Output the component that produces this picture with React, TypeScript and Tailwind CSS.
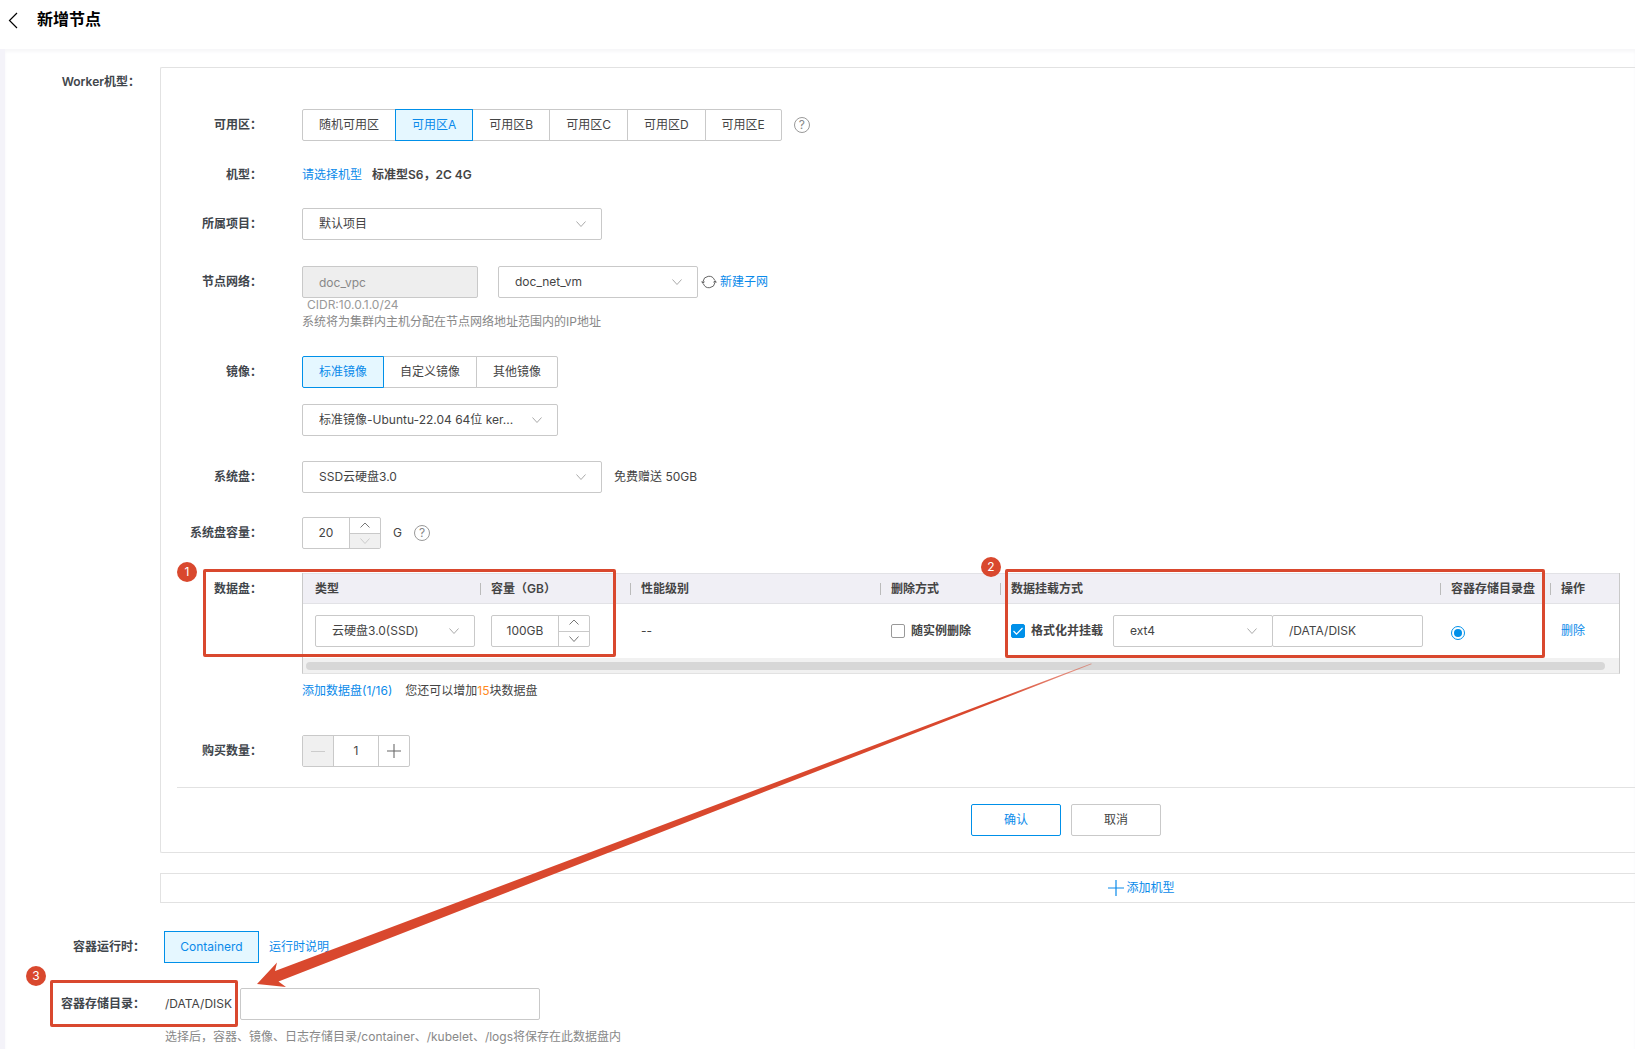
import { ReactNode, useState } from "react"

const BORDER = "border border-[#c9c9c9]"

const Arrow = ({ up = false, className = "" }: { up?: boolean; className?: string }) => (
    <svg width="12" height="8" viewBox="0 0 12 8" fill="none" stroke="currentColor" className={className} aria-hidden="true">
        <path d={up ? "M1.5 5.5 6 1l4.5 4.5" : "M1.5 1.5 6 6.5l4.5-5"} />
    </svg>
)

const Plus = ({ size }: { size: number }) => (
    <svg width={size} height={size} viewBox="0 0 16 16" fill="none" stroke="currentColor" aria-hidden="true">
        <path d="M0 8h16M8 0v16" strokeWidth="1.2" />
    </svg>
)

const Help = () => (
    <button type="button" aria-label="帮助" className="flex h-4 w-4 items-center justify-center rounded-full border border-[#999] text-xs leading-none text-[#888]">
        ?
    </button>
)

const Select = ({ id, label, value, className }: { id: string; label: string; value: string; className: string }) => (
    <div className={`relative ${className}`}>
        <select id={id} aria-label={label} className={`h-8 w-full appearance-none rounded-xs bg-white pr-10 pl-4 text-[#444] ${BORDER}`}>
            <option>{value}</option>
        </select>
        <Arrow className="pointer-events-none absolute top-3 right-[15px] text-[#aaa]" />
    </div>
)

const Tabs = ({ items, start }: { items: string[]; start: string }) => {
    const [active, setActive] = useState<string>(start)
    return (
        <div className="flex">
            {items.map((item) => (
                <button
                    key={item}
                    type="button"
                    onClick={() => setActive(item)}
                    className={`-mr-px h-8 border px-4 first:rounded-l-xs last:mr-0 last:rounded-r-xs ${
                        active === item ? "relative border-[#0090e9] bg-[#e5f7ff] text-[#0a8aea]" : "border-[#c9c9c9] bg-white"
                    }`}
                >
                    {item}
                </button>
            ))}
        </div>
    )
}

const Stepper = ({ label, value, inputClass, minReached = false }: { label: string; value: string; inputClass: string; minReached?: boolean }) => (
    <div className={`flex h-8 w-fit rounded-xs ${BORDER}`}>
        <input aria-label={label} defaultValue={value} className={`text-center ${inputClass}`} />
        <div className="flex w-[31px] flex-col border-l border-[#c9c9c9] text-[#777]">
            <button type="button" aria-label="增加" className="flex h-[15px] items-center justify-center">
                <Arrow up />
            </button>
            <button
                type="button"
                aria-label="减少"
                disabled={minReached}
                className="flex h-[15px] items-center justify-center border-t border-[#c9c9c9] disabled:bg-[#f0f0f0] disabled:text-[#ccc]"
            >
                <Arrow />
            </button>
        </div>
    </div>
)

const Row = ({ label, className = "", children }: { label: string; className?: string; children: ReactNode }) => (
    <div className={`flex ${className}`}>
        <div className="w-[101px] shrink-0 text-right leading-8 font-semibold text-[#41464c]">{label}</div>
        <div className="ml-10 min-w-0 flex-1">{children}</div>
    </div>
)

const Th = ({ width, children }: { width: string; children: ReactNode }) => (
    <th className={`p-0 text-left font-semibold ${width}`}>
        <div className="border-l border-[#bbb] pl-[10px] leading-3">{children}</div>
    </th>
)

const Check = ({ label, checked }: { label: string; checked: boolean }) => (
    <label className="flex shrink-0 items-center gap-1.5 font-semibold">
        <span className="relative flex h-3.5 w-3.5">
            <input
                type="checkbox"
                defaultChecked={checked}
                className="peer h-3.5 w-3.5 appearance-none rounded-xs border border-[#999] bg-white checked:border-[#0090e9] checked:bg-[#0090e9]"
            />
            <svg viewBox="0 0 14 14" fill="none" stroke="#fff" className="pointer-events-none absolute inset-0 hidden peer-checked:block" aria-hidden="true">
                <path d="m2.5 7 3 3.2 6-6.2" strokeWidth="1.2" />
            </svg>
        </span>
        {label}
    </label>
)

const DiskTable = () => (
    <div className="mr-[15px] border-x border-b border-x-[#c9c9c9] border-b-[#e2e2e2]">
        <table className="w-full table-fixed border-collapse">
            <thead>
                <tr className="h-[30px] border-y border-[#e2e2e6] bg-[#f0eff5]">
                    <th className="w-[177px] p-0 pl-3 text-left font-semibold">类型</th>
                    <Th width="w-[150px]">容量（GB）</Th>
                    <Th width="w-[250px]">性能级别</Th>
                    <Th width="w-[120px]">删除方式</Th>
                    <Th width="w-[440px]">数据挂载方式</Th>
                    <Th width="w-[110px]">容器存储目录盘</Th>
                    <Th width="">操作</Th>
                </tr>
            </thead>
            <tbody>
                <tr className="h-[54px]">
                    <td className="pl-3">
                        <Select id="disk-type" label="类型" value="云硬盘3.0(SSD)" className="w-40" />
                    </td>
                    <td className="pl-[11px]">
                        <Stepper label="容量" value="100GB" inputClass="w-[66px]" />
                    </td>
                    <td className="pl-[11px]">--</td>
                    <td className="pl-[11px]">
                        <Check label="随实例删除" checked={false} />
                    </td>
                    <td className="pl-[11px]">
                        <div className="flex items-center">
                            <Check label="格式化并挂载" checked />
                            <Select id="fs" label="文件系统" value="ext4" className="ml-[10px] w-40" />
                            <input aria-label="挂载目录" defaultValue="/DATA/DISK" className={`-ml-px h-8 w-[151px] rounded-xs px-4 ${BORDER}`} />
                        </div>
                    </td>
                    <td className="pl-[11px]">
                        <input
                            type="radio"
                            aria-label="容器存储目录盘"
                            defaultChecked
                            className="mt-1 block h-3.5 w-3.5 appearance-none rounded-full border border-[#0090e9] bg-[#0090e9] bg-clip-content p-0.5"
                        />
                    </td>
                    <td className="pl-[11px]">
                        <a href="#" className="text-[#0a8aea]">删除</a>
                    </td>
                </tr>
            </tbody>
        </table>
        <div className="h-[15px] bg-[#f1f1f1] py-1 pr-3.5 pl-[3px]">
            <div className="h-2 rounded-full bg-[#d7d7d7]" />
        </div>
    </div>
)

const Callout = ({ n, badge, box }: { n: number; badge: string; box: string }) => (
    <>
        <div className={`absolute rounded-xs border-3 border-[#d9482e] ${box}`} />
        <div className={`absolute flex h-5 w-5 items-center justify-center rounded-full bg-[#d9482e] text-white ${badge}`}>{n}</div>
    </>
)

const Annotations = () => (
    <div className="pointer-events-none absolute inset-0">
        <Callout n={1} box="top-[569px] left-[203px] h-[88px] w-[413px]" badge="top-[562px] left-[177px]" />
        <Callout n={2} box="top-[569px] left-[1005px] h-[89px] w-[540px]" badge="top-[557px] left-[981px]" />
        <Callout n={3} box="top-[980px] left-[50px] h-[47px] w-[188px]" badge="top-[966px] left-[26px]" />
        <svg className="absolute top-[660px] left-[250px]" width="850" height="340" viewBox="250 660 850 340" aria-hidden="true">
            <defs>
                <linearGradient id="fade" gradientUnits="userSpaceOnUse" x1="1000" y1="700" x2="1090" y2="664">
                    <stop offset="0" stopColor="#d9482e" />
                    <stop offset="1" stopColor="#d9482e" stopOpacity="0.5" />
                </linearGradient>
            </defs>
            <path d="M257 984 277 962.500 275 971 1091 663.500 1092 664 278.500 981.500 286 987Z" fill="url(#fade)" />
        </svg>
    </div>
)

export default function App() {
    return (
        <div className="relative overflow-hidden bg-[#f4f3f9] font-['Inter','Noto_Sans_CJK_SC',sans-serif] text-xs text-[#444]">
            <header className="flex h-[49px] items-start bg-white pt-[7px] pl-2">
                <a href="#" aria-label="返回" className="mt-[5px] text-black">
                    <svg width="11" height="17" viewBox="0 0 11 17" fill="none" stroke="currentColor" strokeWidth="1.2" aria-hidden="true">
                        <path d="M9 1 1.500 8.500 9 16" />
                    </svg>
                </a>
                <h1 className="ml-[18px] text-base leading-6 font-semibold text-black">新增节点</h1>
            </header>

            <main className="ml-[5px] bg-white pt-[18px] pb-[3px] shadow-[inset_0_3px_3px_#f7f7f9]">
                <div className="flex">
                    <div className="mr-5 w-[135px] shrink-0 text-right leading-[30px] font-semibold text-[#41464c]">Worker机型：</div>
                    <section className="min-w-0 flex-1 rounded-l-xs border border-r-0 border-[#e2e2e2] pt-[41px] pb-4">
                        <Row label="可用区：">
                            <div className="flex items-center gap-3">
                                <Tabs start="可用区A" items={["随机可用区", "可用区A", "可用区B", "可用区C", "可用区D", "可用区E"]} />
                                <Help />
                            </div>
                        </Row>
                        <Row label="机型：" className="mt-[18px]">
                            <div className="flex gap-2.5 leading-8">
                                <a href="#" className="text-[#0a8aea]">请选择机型</a>
                                <b className="font-semibold">标准型S6，2C 4G</b>
                            </div>
                        </Row>
                        <Row label="所属项目：" className="mt-[17px]">
                            <Select id="project" label="所属项目" value="默认项目" className="w-75" />
                        </Row>
                        <Row label="节点网络：" className="mt-[26px]">
                            <div className="flex items-center">
                                <input aria-label="VPC" disabled value="doc_vpc" className={`h-8 w-44 rounded-xs bg-[#eee] px-4 text-[#888] ${BORDER}`} />
                                <Select id="subnet" label="子网" value="doc_net_vm" className="ml-5 w-50" />
                                <button type="button" aria-label="刷新" className="ml-[3px] text-[#666]">
                                    <svg width="16" height="14" viewBox="0 0 16 14" fill="none" stroke="currentColor" aria-hidden="true">
                                        <path d="M2 6.500A6 6 0 0 1 13.500 5M14 7.500A6 6 0 0 1 2.500 9" />
                                        <path d="M0 6.500h4L2 9ZM12 7.500h4L14 5Z" fill="currentColor" stroke="none" />
                                    </svg>
                                </button>
                                <a href="#" className="ml-[3px] text-[#0a8aea]">新建子网</a>
                            </div>
                            <p className="pl-[5px] leading-[14px] text-[#999]">CIDR:10.0.1.0/24</p>
                            <p className="leading-5 text-[#888]">系统将为集群内主机分配在节点网络地址范围内的IP地址</p>
                        </Row>
                        <Row label="镜像：" className="mt-6">
                            <Tabs start="标准镜像" items={["标准镜像", "自定义镜像", "其他镜像"]} />
                            <Select id="image" label="镜像" value="标准镜像-Ubuntu-22.04 64位 ker..." className="mt-4 w-64" />
                        </Row>
                        <Row label="系统盘：" className="mt-[25px]">
                            <div className="flex items-center gap-3">
                                <Select id="sysdisk" label="系统盘" value="SSD云硬盘3.0" className="w-75" />
                                <span>免费赠送 50GB</span>
                            </div>
                        </Row>
                        <Row label="系统盘容量：" className="mt-6">
                            <div className="flex items-center gap-3">
                                <Stepper label="系统盘容量" value="20" inputClass="w-[46px]" minReached />
                                <span>G</span>
                                <Help />
                            </div>
                        </Row>
                        <Row label="数据盘：" className="mt-6">
                            <DiskTable />
                            <div className="mt-[7px] flex gap-[13px] leading-5">
                                <a href="#" className="text-[#0a8aea]">添加数据盘(1/16)</a>
                                <span>您还可以增加<span className="text-[#ff8a1e]">15</span>块数据盘</span>
                            </div>
                        </Row>
                        <Row label="购买数量：" className="mt-[34px]">
                            <div className={`flex h-8 w-[108px] rounded-xs ${BORDER}`}>
                                <button type="button" disabled aria-label="减少" className="flex w-[30px] items-center justify-center bg-[#f0f0f0] text-[#ccc]">
                                    <svg width="14" height="14" viewBox="0 0 14 14" stroke="currentColor" aria-hidden="true">
                                        <path d="M0 7.500h14" />
                                    </svg>
                                </button>
                                <input aria-label="购买数量" defaultValue="1" className="min-w-0 flex-1 border-x border-[#c9c9c9] text-center" />
                                <button type="button" aria-label="增加" className="flex w-[30px] items-center justify-center text-[#666]">
                                    <Plus size={14} />
                                </button>
                            </div>
                        </Row>
                        <div className="mt-5 ml-4 flex justify-center gap-2.5 border-t border-[#e2e2e2] pt-4 pl-80">
                            <button type="button" className="h-8 w-[90px] rounded-xs border border-[#0090e9] text-[#0a8aea]">确认</button>
                            <button type="button" className={`h-8 w-[90px] rounded-xs ${BORDER}`}>取消</button>
                        </div>
                    </section>
                </div>

                <div className="mt-5 ml-[155px] flex h-[30px] items-center justify-center border border-r-0 border-[#e2e2e2] pl-[487px]">
                    <button type="button" className="flex items-center gap-0.5 text-[#0a8aea]">
                        <Plus size={16} />
                        添加机型
                    </button>
                </div>

                <div className="mt-7 flex items-center">
                    <div className="mr-[19px] w-[140px] text-right font-semibold text-[#41464c]">容器运行时：</div>
                    <button type="button" className="h-8 w-[95px] border border-[#0090e9] bg-[#e5f7ff] text-[#0a8aea]">Containerd</button>
                    <a href="#" className="ml-2.5 text-[#0a8aea]">运行时说明</a>
                </div>

                <div className="mt-[25px] flex items-center">
                    <label htmlFor="storage" className="mr-5 w-[140px] text-right font-semibold text-[#41464c]">容器存储目录：</label>
                    <span className="w-[75px]">/DATA/DISK</span>
                    <input id="storage" className={`h-8 w-75 rounded-xs px-4 ${BORDER}`} />
                </div>
                <p className="mt-[7px] ml-40 leading-5 text-[#888]">选择后，容器、镜像、日志存储目录/container、/kubelet、/logs将保存在此数据盘内</p>
            </main>

            <Annotations />
        </div>
    )
}
